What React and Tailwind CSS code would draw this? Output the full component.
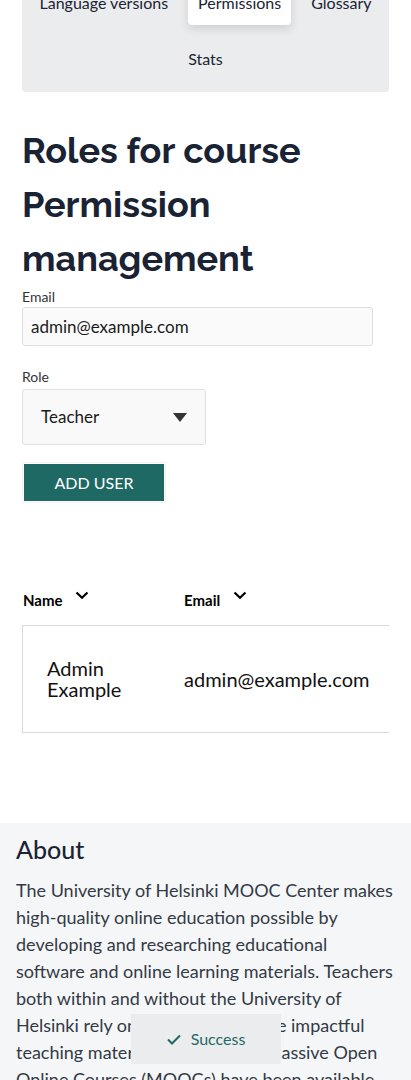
import React from "react";

function Chevron() {
  return (
    <svg width="14" height="9" viewBox="0 0 14 9" className="block">
      <path d="M1.5 1.5 L7 6.8 L12.5 1.5" fill="none" stroke="#000" strokeWidth="2.2" />
    </svg>
  );
}

export default function App() {
  const tabs = ["Language versions", "Permissions", "Glossary", "Stats"];
  return (
    <div className="w-[411px] h-[1080px] overflow-hidden bg-white font-['Lato','Noto_Sans',sans-serif] text-[#1a2333]">
      <div className="px-[22px]">
        <div className="mt-[-30px] bg-[#ebecee] rounded-b-[4px] pt-[10px] pb-[11px] flex flex-wrap justify-center gap-x-[10px] gap-y-[11px]">
          {tabs.map((t) => (
            <div
              key={t}
              className={
                "h-[45px] px-[10px] flex items-center text-[16px] leading-none rounded-[4px] " +
                (t === "Permissions" ? "bg-white shadow-[0_4px_10px_rgba(0,0,0,0.12)]" : "")
              }
            >
              {t}
            </div>
          ))}
        </div>

        <h1 className="mt-[31px] text-[36px] leading-[54px] font-bold font-['Raleway','Lato',sans-serif] text-[#1a2333]">
          Roles for course Permission management
        </h1>

        <div className="mt-[3px] text-[14px] leading-[18px] text-[#333]">Email</div>
        <div className="mt-[1px] w-[351px] h-[39px] bg-[#fafafa] border border-[#dedede] rounded-[3px] flex items-center px-[8px] text-[17px] text-[#1a1a1a]">
          admin@example.com
        </div>

        <div className="mt-[22px] text-[14px] leading-[18px] text-[#333]">Role</div>
        <div className="mt-[3px] w-[184px] h-[56px] bg-[#f9f9f9] border border-[#e0e0e0] rounded-[3px] flex items-center justify-between pl-[18px] pr-[18px] text-[17px] text-[#1a1a1a]">
          <span>Teacher</span>
          <svg width="14" height="9" viewBox="0 0 14 9">
            <path d="M0 0 L14 0 L7 9 Z" fill="#333" />
          </svg>
        </div>

        <div className="mt-[17px] inline-flex border border-[#f3f3f3] p-[1px]">
          <div className="w-[140px] h-[37px] bg-[#1f6964] text-white text-[16px] flex items-center justify-center">
            ADD USER
          </div>
        </div>

        <div className="mt-[84px] w-[367px] overflow-hidden">
          <div className="flex items-center h-[26px] text-[15px] font-bold text-black">
            <div className="w-[162px] flex items-start gap-[12px] pl-[1px]">
              <span>Name</span>
              <span className="mt-[2px]"><Chevron /></span>
            </div>
            <div className="flex items-start gap-[13px]">
              <span>Email</span>
              <span className="mt-[2px]"><Chevron /></span>
            </div>
          </div>
          <div className="mt-[12px] w-[440px] h-[108px] border border-[#d9d9d9] flex items-center text-[20px] text-[#111]">
            <div className="w-[161px] pl-[24px] leading-[21px]">
              <div>Admin</div>
              <div>Example</div>
            </div>
            <div>admin@example.com</div>
          </div>
        </div>
      </div>

      <div className="mt-[90px] bg-[#f5f6f8] px-[16px] pt-[8px] pb-[40px]">
        <h2 className="text-[25px] leading-[36px] font-medium text-[#1a2333]">About</h2>
        <p className="mt-[10px] text-[18px] leading-[27px] text-[#333a45]">
          The University of Helsinki MOOC Center makes high-quality online education possible by developing and researching educational software and online learning materials. Teachers both within and without the University of Helsinki rely on our tools to create impactful teaching materials. Our current Massive Open Online Courses (MOOCs) have been available since 2012.
        </p>
      </div>

      <div className="fixed left-[131px] top-[1014px] w-[150px] h-[50px] bg-[#ebecee] flex items-center justify-center gap-[10px] text-[16px] text-[#1f6964]">
        <svg width="14" height="11" viewBox="0 0 14 11">
          <path d="M1 5.5 L5 9.5 L13 1.5" fill="none" stroke="#1f6964" strokeWidth="2" />
        </svg>
        <span>Success</span>
      </div>
    </div>
  );
}
